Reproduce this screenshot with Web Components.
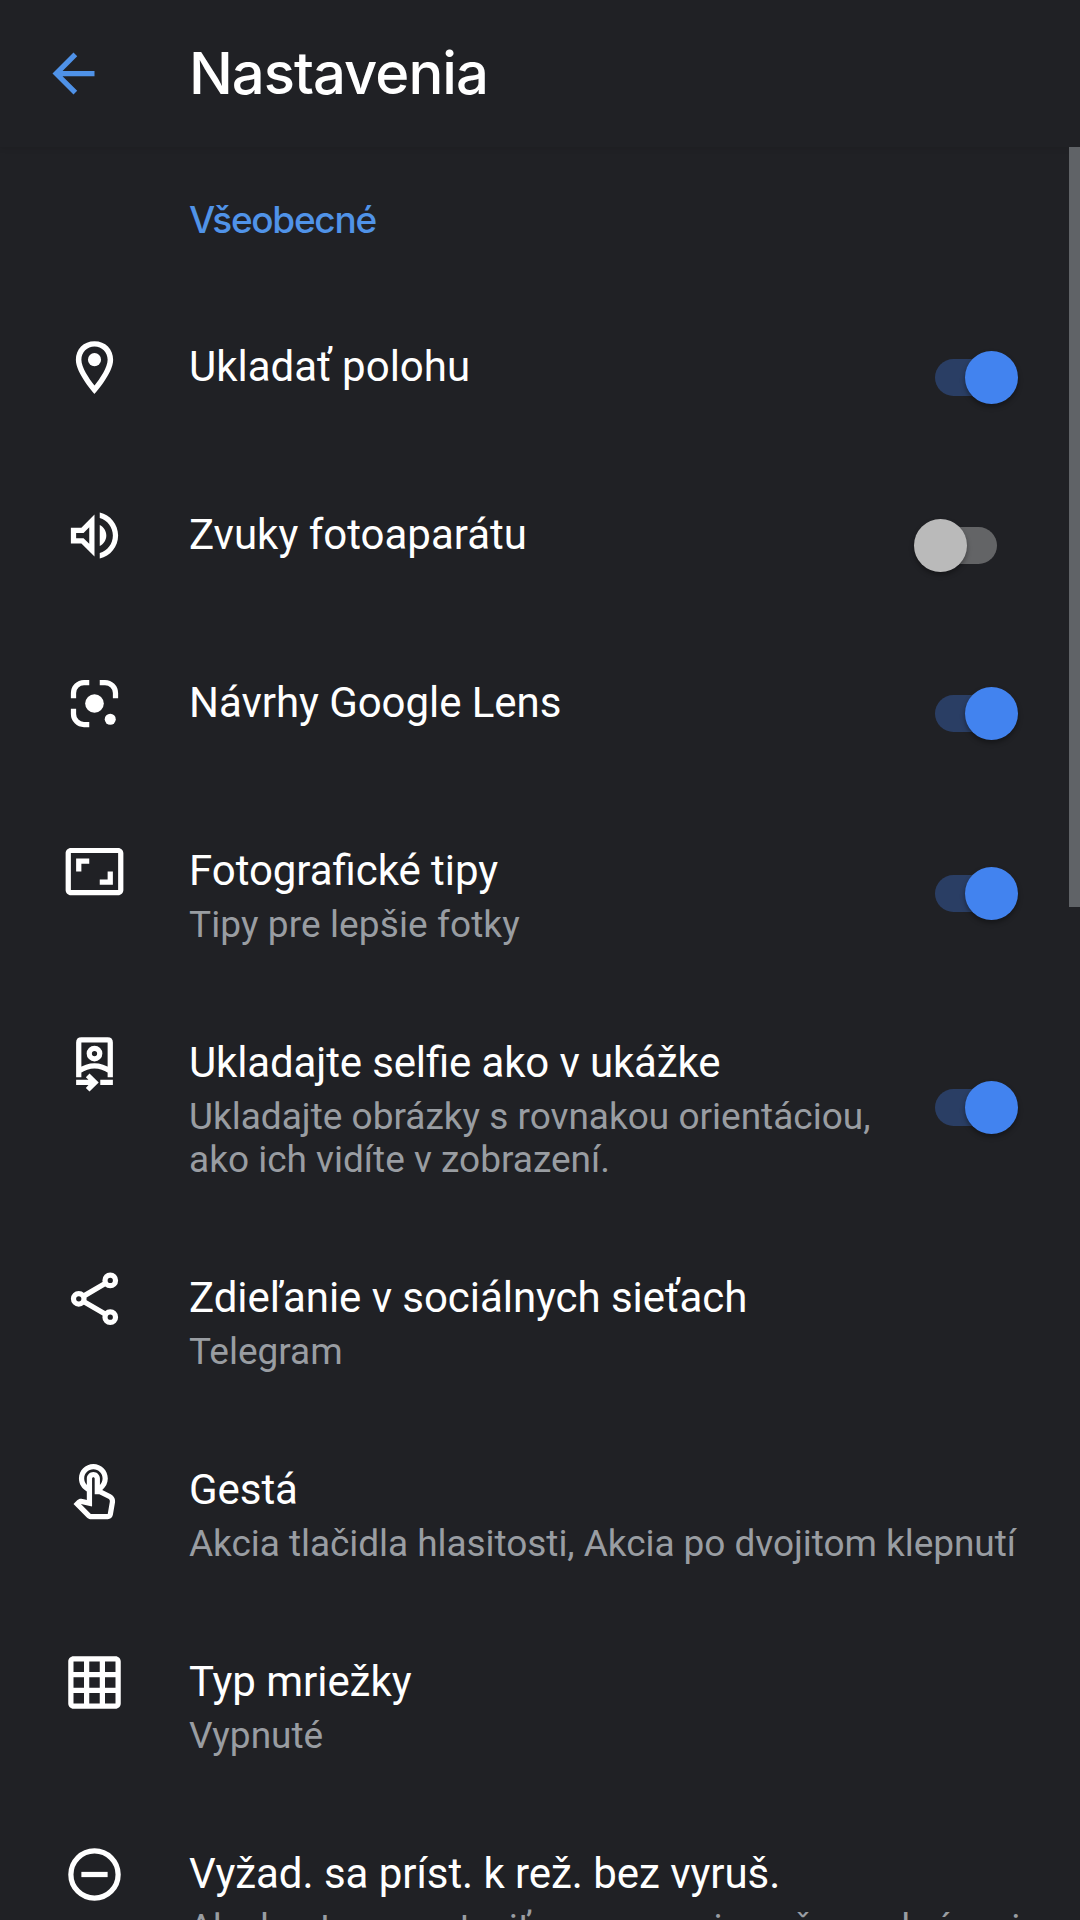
<!DOCTYPE html>
<html lang="sk">
<head>
  <meta charset="utf-8">
  <title>Nastavenia</title>
  <style>
    body {
      margin: 0;
      background: #202125;
      color: #fff;
      font-family: Roboto, "Noto Sans", sans-serif;
    }
  </style>
</head>
<body>
  <settings-page>
    <app-bar slot="bar">Nastavenia</app-bar>
    <section-title>Všeobecné</section-title>
    <setting-item icon="place" switch="on" style="--title-tracking: 0">Ukladať polohu</setting-item>
    <setting-item icon="volume" switch="off" style="--title-tracking: 0">Zvuky fotoaparátu</setting-item>
    <setting-item icon="lens" switch="on">Návrhy Google Lens</setting-item>
    <setting-item icon="tips" switch="on" style="--summary-tracking: 0.1px">Fotografické tipy<span slot="summary">Tipy pre lepšie fotky</span></setting-item>
    <setting-item icon="selfie" switch="on" style="--title-tracking: -0.14px">Ukladajte selfie ako v ukážke<span slot="summary">Ukladajte obrázky s rovnakou orientáciou, ako ich vidíte v zobrazení.</span></setting-item>
    <setting-item icon="share">Zdieľanie v sociálnych sieťach<span slot="summary">Telegram</span></setting-item>
    <setting-item icon="touch" style="--summary-tracking: -0.05px">Gestá<span slot="summary">Akcia tlačidla hlasitosti, Akcia po dvojitom klepnutí</span></setting-item>
    <setting-item icon="grid">Typ mriežky<span slot="summary">Vypnuté</span></setting-item>
    <setting-item icon="dnd" style="--summary-tracking: -0.05px">Vyžad. sa príst. k rež. bez vyruš.<span slot="summary">Ak chcete pozastaviť upozornenia počas nahrávania</span></setting-item>
  </settings-page>

  <script>
    const icons = {
      back: `<path d="M20 11H7.83l5.59-5.59L12 4l-8 8 8 8 1.41-1.41L7.83 13H20z"/>`,
      place: `<path d="M12 2C7.8 2 4.9 5.1 4.9 9c0 5.25 7.1 13 7.1 13s7.1-7.75 7.1-13C19.1 5.1 16.2 2 12 2zM7 9c0-2.76 2.24-5 5-5s5 2.24 5 5c0 2.88-2.88 7.19-5 9.88C9.92 16.21 7 11.85 7 9z"/><circle cx="12" cy="9" r="2.5"/>`,
      volume: `<path d="M3 9v6h4l5 5V4L7 9H3zm7-.17v6.34L7.83 13H5v-2h2.83L10 8.83zM14 3.23v2.06c2.89.86 5 3.54 5 6.71s-2.11 5.85-5 6.71v2.06c4.01-.91 7-4.49 7-8.77s-2.99-7.86-7-8.77zM16.5 12c0-1.77-1.02-3.29-2.5-4.03v8.05c1.48-.73 2.5-2.25 2.5-4.02z"/>`,
      lens: `<path d="M10 4H8C5.79 4 4 5.79 4 8v2M14 4h2c2.21 0 4 1.79 4 4v2M4 14v2c0 2.21 1.79 4 4 4h2" fill="none" stroke="currentColor" stroke-width="2"/><circle cx="12" cy="12" r="3.55"/><circle cx="18" cy="18" r="2.1"/>`,
      tips: `<path d="M19 12h-2v3h-3v2h5v-5zM7 9h3V7H5v5h2V9zm14-6H3c-1.1 0-2 .9-2 2v14c0 1.1.9 2 2 2h18c1.1 0 2-.9 2-2V5c0-1.1-.9-2-2-2zm0 16.01H3V4.99h18v14.02z"/>`,
      selfie: `<path d="M6 17.2V4q0-1 1-1h10q1 0 1 1v13.2M6 14.9q6-4 12 0" fill="none" stroke="currentColor" stroke-width="2"/><circle cx="12" cy="8.2" r="2" fill="none" stroke="currentColor" stroke-width="2"/><path d="M5 18.2h4.7l-1-1 1.4-1.4 3.5 3.4-3.5 3.5-1.4-1.4 1-1.1H5zM14.2 18.2H19v2h-4.8z"/>`,
      share: `<g fill="none" stroke="currentColor" stroke-width="2"><path d="M8 11l8.2-4.8M8 13.2l8.2 4.8"/><circle cx="18" cy="5.1" r="2"/><circle cx="6" cy="12.1" r="2"/><circle cx="18" cy="19.1" r="2"/></g>`,
      touch: `<path transform="translate(0 .95)" d="M18.19 12.44l-3.24-1.62c1.29-1 2.12-2.56 2.12-4.32 0-3.03-2.47-5.5-5.5-5.5s-5.5 2.47-5.5 5.5c0 2.13 1.22 3.98 3 4.89v3.26c-2.11-.45-2.01-.44-2.26-.44-.53 0-1.03.21-1.41.59L4 16.22l5.09 5.09c.43.44 1.03.69 1.65.69h6.3c.98 0 1.81-.7 1.97-1.67l.8-4.71c.22-1.3-.43-2.58-1.62-3.18zm-.35 2.85l-.8 4.71h-6.3c-.09 0-.17-.04-.24-.1l-3.68-3.68 4.25.89V6.5c0-.28.22-.5.5-.5s.5.22.5.5v6h1.76l3.46 1.73c.4.2.62.63.55 1.06zM8.07 6.5c0-1.93 1.57-3.5 3.5-3.5s3.5 1.57 3.5 3.5c0 .95-.38 1.81-1 2.44V6.5c0-1.38-1.12-2.5-2.5-2.5s-2.5 1.12-2.5 2.5v2.44c-.62-.63-1-1.49-1-2.44z"/>`,
      grid: `<path fill-rule="evenodd" d="M4 2h16c1.1 0 2 .9 2 2v16c0 1.1-.9 2-2 2H4c-1.1 0-2-.9-2-2V4c0-1.1.9-2 2-2zM4 4v4h4V4zM10 4v4h4V4zM16 4v4h4V4zM4 10v4h4v-4zM10 10v4h4v-4zM16 10v4h4v-4zM4 16v4h4v-4zM10 16v4h4v-4zM16 16v4h4v-4z"/>`,
      dnd: `<circle cx="12" cy="12" r="9" fill="none" stroke="currentColor" stroke-width="2"/><path d="M7 11h10v2H7z"/>`
    };

    class SvgIcon extends HTMLElement {
      constructor() {
        super();
        this.attachShadow({ mode: "open" });
      }

      connectedCallback() {
        this.shadowRoot.innerHTML = `
          <style>
            :host {
              display: block;
              flex: none;
              width: 63px;
              height: 63px;
            }
            svg {
              display: block;
              width: 100%;
              height: 100%;
              fill: currentColor;
            }
          </style>
          <svg viewBox="0 0 24 24">${icons[this.getAttribute("name")]}</svg>
        `;
      }
    }

    class ToggleSwitch extends HTMLElement {
      constructor() {
        super();
        this.attachShadow({ mode: "open" }).innerHTML = `
          <style>
            :host {
              display: flex;
              flex: none;
              align-items: center;
              width: 62px;
              height: 37px;
              border-radius: 19px;
              background: #636466;
            }
            .thumb {
              flex: none;
              width: 53px;
              height: 53px;
              margin-left: -21px;
              border-radius: 50%;
              background: #bababa;
              box-shadow: 0 3px 5px rgba(0, 0, 0, 0.35);
            }
            :host([state="on"]) {
              background: #2a3e64;
            }
            :host([state="on"]) .thumb {
              margin-left: 30px;
              background: #4283ef;
            }
          </style>
          <div class="thumb"></div>
        `;
      }
    }

    class AppBar extends HTMLElement {
      constructor() {
        super();
        this.attachShadow({ mode: "open" }).innerHTML = `
          <style>
            :host {
              display: flex;
              flex: none;
              align-items: center;
              box-sizing: border-box;
              height: 147px;
              padding-left: 42px;
              box-shadow: 0 1px 6px rgba(0, 0, 0, 0.1);
            }
            svg-icon {
              color: #4f92e8;
              margin-right: 84px;
            }
            h1 {
              margin: 0 0 1px;
              font: 500 58px/70px Inter, sans-serif;
              letter-spacing: -1px;
            }
          </style>
          <svg-icon name="back"></svg-icon>
          <h1><slot></slot></h1>
        `;
      }
    }

    class SectionTitle extends HTMLElement {
      constructor() {
        super();
        this.attachShadow({ mode: "open" }).innerHTML = `
          <style>
            :host {
              display: block;
              flex: none;
              box-sizing: border-box;
              height: 146px;
              padding: 51px 0 0 189px;
              color: #5093e8;
              font: 500 37px/44px Inter, sans-serif;
              letter-spacing: -1.3px;
            }
          </style>
          <slot></slot>
        `;
      }
    }

    class SettingItem extends HTMLElement {
      constructor() {
        super();
        this.attachShadow({ mode: "open" });
      }

      connectedCallback() {
        const state = this.getAttribute("switch");
        this.shadowRoot.innerHTML = `
          <style>
            :host {
              display: flex;
              flex: none;
              box-sizing: border-box;
              min-height: 168px;
              padding-left: 63px;
            }
            svg-icon {
              margin: 42.5px 63px 0 0;
            }
            .text {
              flex: 1;
              min-width: 0;
              padding: 49px 0 43px;
              font-size: 42px;
              font-feature-settings: "liga" 1;
              line-height: 49px;
              letter-spacing: var(--title-tracking, -0.05px);
              white-space: nowrap;
            }
            ::slotted([slot="summary"]) {
              display: block;
              margin-top: 8px;
              color: #999da2;
              font-size: 37px;
              line-height: 43px;
              letter-spacing: var(--summary-tracking, 0);
            }
            :host([switch]) .text {
              white-space: normal;
            }
            toggle-switch {
              align-self: center;
              margin: 1px 83px 0 21px;
            }
          </style>
          <svg-icon name="${this.getAttribute("icon")}"></svg-icon>
          <div class="text"><slot></slot><slot name="summary"></slot></div>
          ${state ? `<toggle-switch state="${state}"></toggle-switch>` : ""}
        `;
      }
    }

    class SettingsPage extends HTMLElement {
      constructor() {
        super();
        this.attachShadow({ mode: "open" }).innerHTML = `
          <style>
            :host {
              display: flex;
              flex-direction: column;
              height: 1920px;
              overflow: hidden;
            }
            .list {
              position: relative;
              display: flex;
              flex: 1;
              flex-direction: column;
              min-height: 0;
              overflow: hidden;
            }
            /* scrollbar floats over the list */
            .scrollbar {
              position: absolute;
              top: 0;
              right: 0;
              width: 11px;
              height: 760px;
              background: #606367;
            }
          </style>
          <slot name="bar"></slot>
          <div class="list">
            <slot></slot>
            <div class="scrollbar"></div>
          </div>
        `;
      }
    }

    customElements.define("svg-icon", SvgIcon);
    customElements.define("toggle-switch", ToggleSwitch);
    customElements.define("app-bar", AppBar);
    customElements.define("section-title", SectionTitle);
    customElements.define("setting-item", SettingItem);
    customElements.define("settings-page", SettingsPage);
  </script>
</body>
</html>
